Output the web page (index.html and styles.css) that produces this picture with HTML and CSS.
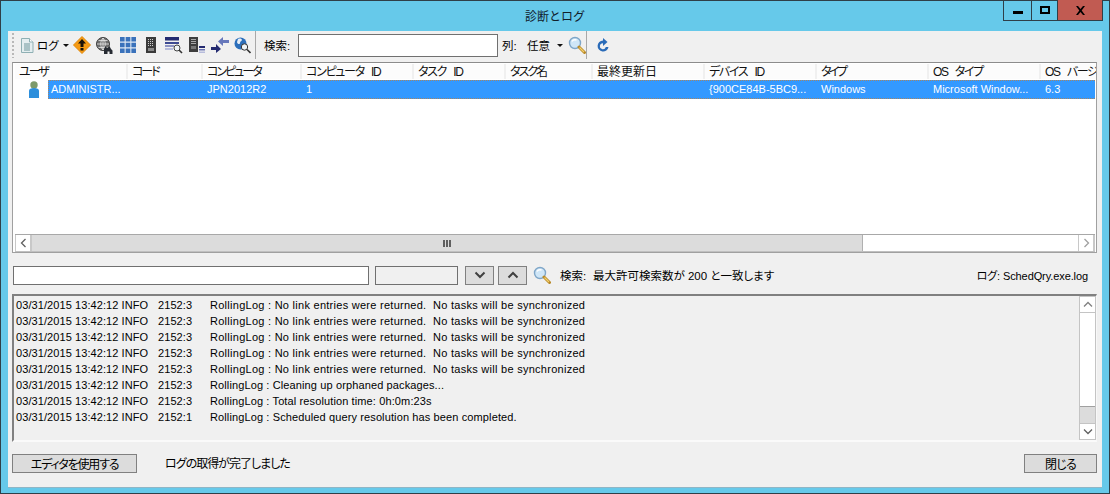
FILE: index.html
```html
<!DOCTYPE html>
<html lang="ja">
<head>
<meta charset="utf-8">
<title>診断とログ</title>
<link rel="stylesheet" href="styles.css">
</head>
<body>
<div class="window">
  <header class="titlebar">
    <span></span>
    <h1 class="title">診断とログ</h1>
    <div class="controls">
      <div class="ctl ctl-min"><i class="min-glyph"></i></div>
      <div class="ctl ctl-max"><i class="max-glyph"></i></div>
      <div class="ctl ctl-close"><svg width="11" height="9" viewBox="0 0 11 9"><path d="M1 0h2l2.500 3L8 0h2L6.700 4.500 10 9H8L5.500 6 3 9H1l3.300-4.500z" fill="#000"/></svg></div>
    </div>
  </header>

  <div class="client">
    <div class="toolbar">
      <div class="grip"></div>
      <div class="tool">
        <svg width="14" height="15" viewBox="0 0 14 15"><path d="M1.500.5h8l3.500 3.500v10.500h-11.500z" fill="#e4eef0" stroke="#8fb0b4"/><path d="M9.500.5v3.500h3.500" fill="#fff" stroke="#8fb0b4"/><path d="M4 6h6M4 8h6M4 10h6M4 12h6" stroke="#6f979c"/></svg>
      </div>
      <span class="tb-text tb-log">ログ</span>
      <i class="caret caret-log"></i>
      <div class="tool tool-first">
        <svg width="18" height="18" viewBox="0 0 18 18"><path d="M9 .5 17.500 9 9 17.500.5 9z" fill="#f59a12" stroke="#e08506"/><path d="M9 3 13 7.500H10.500V11H7.500V7.500H5zM7.500 12h3v2.500h-3z" fill="#1a1208"/></svg>
      </div>
      <div class="tool">
        <svg width="17" height="17" viewBox="0 0 17 17"><circle cx="7" cy="7" r="6.500" fill="#6e6e6e" stroke="#3e3e3e"/><path d="M1 7h12M7 1v12M2.500 3.500h9M2.500 10.500h9M7 1C4 4 4 10 7 13M7 1c3 3 3 9 0 12" stroke="#e8e8e8" stroke-width=".8" fill="none"/><path d="M8 17v-5l1.500-3 1.500 2 1 0 1.500-2 1.500 3 1.500 1.500V17h-3v-2.500h-2V17z" fill="#262b32"/></svg>
      </div>
      <div class="tool">
        <svg width="16" height="16" viewBox="0 0 16 16"><rect width="16" height="16" fill="#dfe8f3"/><path d="M0 0h4.600v4.600H0zM5.700 0h4.600v4.600H5.700zM11.400 0H16v4.600h-4.600zM0 5.700h4.600v4.600H0zM5.700 5.700h4.600v4.600H5.700zM11.400 5.700H16v4.600h-4.600zM0 11.400h4.600V16H0zM5.700 11.400h4.600V16H5.700zM11.400 11.400H16V16h-4.600z" fill="#3a72bb"/></svg>
      </div>
      <div class="tool">
        <svg width="10" height="16" viewBox="0 0 10 16"><rect width="10" height="16" fill="#3a3a3a"/><path d="M2 2h1v1H2zM4 2h1v1H4zM6 2h1v1H6zM2 4h1v1H2zM4 4h1v1H4zM6 4h1v1H6zM2 6h1v1H2zM4 6h1v1H4zM6 6h1v1H6zM2 8h1v1H2zM4 8h1v1H4zM6 8h1v1H6z" fill="#cfcfcf"/><rect x="2" y="11" width="6" height="3" fill="#8a8a8a"/></svg>
      </div>
      <div class="tool">
        <svg width="18" height="17" viewBox="0 0 18 17"><rect width="14" height="3.500" fill="#232a70"/><rect y="5" width="14" height="2" fill="#3d4a92"/><rect y="8" width="9" height="2" fill="#8c93c4"/><rect y="11" width="8" height="2" fill="#b7bcdc"/><circle cx="12" cy="11" r="3" fill="#eef3f6" stroke="#444"/><path d="M14 13l3 3" stroke="#333" stroke-width="1.600"/></svg>
      </div>
      <div class="tool">
        <svg width="16" height="16" viewBox="0 0 16 16"><rect width="9" height="15" fill="#3e3e3e"/><path d="M2 2h5v1H2zM2 4h5v1H2zM2 6h5v1H2z" fill="#a8a8a8"/><rect x="2" y="9" width="5" height="3" fill="#777"/><path d="M10 9h6v2h-6z" fill="#232a70"/><path d="M10 12h6v1.500h-6z" fill="#6c76b4"/><path d="M10 14.500h6v1.500h-6z" fill="#b7bcdc"/></svg>
      </div>
      <div class="tool">
        <svg width="18" height="16" viewBox="0 0 18 16"><path d="M0 10h5V7l5 5-5 4v-3H0z" fill="#232a70"/><path d="M18 3h-6V0L7 4.500 12 9V6h6z" fill="#6677bb"/></svg>
      </div>
      <div class="tool">
        <svg width="17" height="17" viewBox="0 0 17 17"><circle cx="6.500" cy="6.500" r="6" fill="#2c6fbb"/><path d="M4 2c2-1 4 0 4 1s-2 1-2 3-3 1-3-1zM8 8c2-1 3 0 3 1l-2 2z" fill="#e8eef5"/><circle cx="10.500" cy="10" r="3.200" fill="#eef3f6" stroke="#333"/><path d="M13 12.500l3.500 3.500" stroke="#333" stroke-width="1.600"/></svg>
      </div>
      <div class="sep"></div>
      <span class="tb-text tb-search">検索:</span>
      <input class="search-input" type="text">
      <span class="tb-text tb-col">列:</span>
      <span class="tb-text tb-any">任意</span>
      <i class="caret caret-any"></i>
      <svg class="lens lens-tb" width="18" height="18" viewBox="0 0 18 18"><use href="#lens"/></svg>
      <div class="sep sep-2"></div>
      <svg class="refresh" width="14" height="15" viewBox="0 0 14 15"><path d="M7 2.500a5.500 5.500 0 1 0 5.500 6.500h-2.700A3 3 0 1 1 7 5.200V8l4.500-4L7 0z" fill="#2a6bb8"/></svg>
    </div>

    <section class="table">
      <div class="thead">
        <div class="th tight-2">ユーザ</div>
        <div class="th tight-2">コード</div>
        <div class="th tight-2">コンピュータ</div>
        <div class="th tight-1">コンピュータ ID</div>
        <div class="th tight-1">タスク ID</div>
        <div class="th tight-2">タスク名</div>
        <div class="th">最終更新日</div>
        <div class="th tight-1">デバイス ID</div>
        <div class="th tight-3">タイプ</div>
        <div class="th tight-1">OS タイプ</div>
        <div class="th tight-1">OS バージ</div>
      </div>
      <div class="row">
        <div class="row-icon">
          <svg width="12" height="17" viewBox="0 0 12 17"><circle cx="6" cy="4" r="3.700" fill="#7d9a6a"/><path d="M1 17V9.500C1 8 3 7 6 7s5 1 5 2.500V17z" fill="#2d8fdc"/></svg>
        </div>
        <div class="selection">
          <div class="td td-first">ADMINISTR...</div>
          <div class="td"></div>
          <div class="td">JPN2012R2</div>
          <div class="td">1</div>
          <div class="td"></div>
          <div class="td"></div>
          <div class="td"></div>
          <div class="td">{900CE84B-5BC9...</div>
          <div class="td">Windows</div>
          <div class="td">Microsoft Window...</div>
          <div class="td">6.3</div>
        </div>
      </div>
      <div class="table-fill"></div>
      <div class="hscroll">
        <div class="sbtn"><svg width="7" height="10" viewBox="0 0 7 10"><path d="M5.500 1 1.500 5l4 4" fill="none" stroke="#606060" stroke-width="1.300"/></svg></div>
        <div class="hthumb"><i class="thumb-grip"></i></div>
        <div class="htrack"></div>
        <div class="sbtn"><svg width="7" height="10" viewBox="0 0 7 10"><path d="M1.500 1l4 4-4 4" fill="none" stroke="#a0a0a0" stroke-width="1.300"/></svg></div>
      </div>
    </section>

    <div class="findbar">
      <input class="find-main" type="text">
      <input class="find-count" type="text">
      <button class="nav-btn nav-down" type="button"><svg width="12" height="8" viewBox="0 0 12 8"><path d="M1.500 1.500 6 6l4.500-4.500" fill="none" stroke="#404040" stroke-width="2"/></svg></button>
      <button class="nav-btn nav-up" type="button"><svg width="12" height="8" viewBox="0 0 12 8"><path d="M1.500 6.500 6 2l4.500 4.500" fill="none" stroke="#404040" stroke-width="2"/></svg></button>
      <svg class="lens lens-find" width="18" height="18" viewBox="0 0 18 18"><use href="#lens"/></svg>
      <span class="find-label">検索:</span>
      <span class="find-msg">最大許可検索数が 200 と一致します</span>
      <span class="find-file">ログ: SchedQry.exe.log</span>
    </div>

    <section class="log">
      <div class="log-lines">
        <div class="line"><span>03/31/2015 13:42:12 INFO</span><span>2152:3</span><span class="msg">RollingLog : No link entries were returned.  No tasks will be synchronized</span></div>
        <div class="line"><span>03/31/2015 13:42:12 INFO</span><span>2152:3</span><span class="msg">RollingLog : No link entries were returned.  No tasks will be synchronized</span></div>
        <div class="line"><span>03/31/2015 13:42:12 INFO</span><span>2152:3</span><span class="msg">RollingLog : No link entries were returned.  No tasks will be synchronized</span></div>
        <div class="line"><span>03/31/2015 13:42:12 INFO</span><span>2152:3</span><span class="msg">RollingLog : No link entries were returned.  No tasks will be synchronized</span></div>
        <div class="line"><span>03/31/2015 13:42:12 INFO</span><span>2152:3</span><span class="msg">RollingLog : No link entries were returned.  No tasks will be synchronized</span></div>
        <div class="line"><span>03/31/2015 13:42:12 INFO</span><span>2152:3</span><span class="msg msg-short">RollingLog : Cleaning up orphaned packages...</span></div>
        <div class="line"><span>03/31/2015 13:42:12 INFO</span><span>2152:3</span><span class="msg msg-short">RollingLog : Total resolution time: 0h:0m:23s</span></div>
        <div class="line"><span>03/31/2015 13:42:12 INFO</span><span>2152:1</span><span class="msg msg-short">RollingLog : Scheduled query resolution has been completed.</span></div>
      </div>
      <div class="vscroll">
        <div class="vbtn"><svg width="10" height="7" viewBox="0 0 10 7"><path d="M1 5.500l4-4 4 4" fill="none" stroke="#808080" stroke-width="1.300"/></svg></div>
        <div class="vtrack"></div>
        <div class="vthumb"></div>
        <div class="vbtn"><svg width="10" height="7" viewBox="0 0 10 7"><path d="M1 1.500l4 4 4-4" fill="none" stroke="#606060" stroke-width="1.300"/></svg></div>
      </div>
    </section>

    <footer class="footer">
      <button class="btn btn-editor" type="button">エディタを使用する</button>
      <span class="status">ログの取得が完了しました</span>
      <button class="btn btn-close" type="button">閉じる</button>
    </footer>
  </div>
</div>
<svg class="defs" width="0" height="0">
  <symbol id="lens" viewBox="0 0 18 18">
    <circle cx="7" cy="7" r="5.500" fill="#cfe6f7" stroke="#7fa6c8" stroke-width="1.400"/>
    <path d="M4 5.500C5 3.800 7 3.500 8.500 4" stroke="#fff" stroke-width="1.400" fill="none"/>
    <path d="M11 11l5.500 5.500" stroke="#b98a2a" stroke-width="3" stroke-linecap="round"/>
    <path d="M11.500 11.500l4.500 4.500" stroke="#f3cf6a" stroke-width="1.200"/>
  </symbol>
</svg>
</body>
</html>
```

FILE: styles.css
```css
* { box-sizing: border-box; }
html, body { margin: 0; padding: 0; }
body {
  width: 1110px;
  height: 494px;
  overflow: hidden;
  font-family: "Liberation Sans", "Noto Sans CJK JP", sans-serif;
  font-size: 11px;
  color: #000;
}
.defs { display: block; width: 0; height: 0; }

.window {
  width: 1110px;
  height: 494px;
  display: flex;
  flex-direction: column;
  background: #66c9ea;
  border: 1px solid #2f3f48;
}

.titlebar {
  height: 30px;
  flex: none;
  display: grid;
  grid-template-columns: 1fr auto 1fr;
}
.title {
  margin: 0;
  font-size: 12px;
  font-weight: 400;
  line-height: 30px;
  font-family: "Noto Sans CJK JP", sans-serif;
  color: #10202a;
}
.controls {
  justify-self: end;
  display: flex;
  height: 21px;
  margin-top: -1px;
  margin-right: 6px;
  border: 1px solid #2f3f48;
  border-top: 0;
}
.ctl {
  display: flex;
  align-items: center;
  justify-content: center;
  height: 100%;
}
.ctl-min { width: 28px; border-right: 1px solid #2f3f48; }
.ctl-max { width: 26px; border-right: 1px solid #2f3f48; }
.ctl-close { width: 44px; background: #c15b52; }
.min-glyph { display: block; width: 10px; height: 3px; background: #000; margin-top: 5px; }
.max-glyph { display: block; width: 10px; height: 8px; border: 2px solid #000; }

.client {
  flex: 1;
  margin: 0 7px 6px;
  padding: 0 5px 0 4px;
  background: #f0f0f0;
  box-shadow: 0 1px 0 #8fb6c6;
  display: flex;
  flex-direction: column;
}

/* toolbar */
.toolbar {
  height: 28px;
  flex: none;
  display: flex;
  align-items: center;
  margin-left: -4px;
  margin-right: -5px;
}
.grip {
  width: 3px;
  height: 25px;
  margin-left: 4px;
  background-image: linear-gradient(#b8b8b8 2px, transparent 2px);
  background-size: 2px 4px;
  background-repeat: repeat-y;
}
.tool {
  width: 23px;
  height: 24px;
  flex: none;
  display: flex;
  align-items: center;
  justify-content: center;
}
.tb-text { white-space: nowrap; font-size: 11.5px; font-feature-settings: "palt"; }
.tb-log { margin-left: -1px; width: 22px; }
.caret {
  display: block;
  width: 0;
  height: 0;
  border-style: solid;
  border-width: 3px 3px 0;
  border-color: #111 transparent transparent;
  flex: none;
}
.caret-log { margin-left: 4px; }
.tool-first { margin-left: 1px; }
.sep {
  width: 1px;
  height: 28px;
  background: #a8a8a8;
  flex: none;
  margin-left: 1px;
}
.tb-search { margin-left: 8px; width: 34px; }
.search-input {
  width: 200px;
  height: 23px;
  margin: 0;
  padding: 0;
  background: #fff;
  border: 1px solid #707070;
  border-radius: 0;
  flex: none;
}
.tb-col { margin-left: 4px; width: 25px; }
.tb-any { width: 30px; }
.lens { display: block; flex: none; }
.lens-tb { margin-left: 5px; }
.sep-2 { margin-left: 0; }
.refresh { margin-left: 9px; flex: none; }

/* table */
.table {
  height: 191px;
  margin-top: 3px;
  flex: none;
  display: flex;
  flex-direction: column;
  background: #fff;
  border: 1px solid #a0a0a0;
  border-top-color: #8c8c8c;
  padding: 1px 0 0 1px;
}
.thead {
  display: grid;
  grid-template-columns: 111px 73px 97px 110px 90px 85px 110px 110px 110px 110px 55px;
  column-gap: 2px;
  height: 15px;
  flex: none;
  margin-left: 1px;
  background: #f0f0f0;
}
.th {
  background: #fcfcfc;
  line-height: 17px;
  padding-left: 4px;
  font-size: 12px;
  font-feature-settings: "palt";
  overflow: hidden;
  white-space: nowrap;
  color: #111;
}
.tight-1 { letter-spacing: -1.3px; word-spacing: 5px; }
.tight-2 { letter-spacing: -2px; }
.tight-3 { letter-spacing: -2.5px; }
.row {
  display: flex;
  height: 19px;
  margin-top: 1px;
  flex: none;
}
.row-icon {
  width: 34px;
  flex: none;
  padding-left: 14px;
}
.row-icon svg { display: block; margin-top: 1px; }
.selection {
  flex: 1;
  margin-right: 1px;
  display: grid;
  grid-template-columns: 79px 75px 99px 112px 92px 87px 112px 112px 112px 112px 1fr;
  background-color: #3399ff;
  background-image:
    repeating-linear-gradient(90deg, #a8845f 0 1px, transparent 1px 2px),
    repeating-linear-gradient(90deg, #a8845f 0 1px, transparent 1px 2px),
    repeating-linear-gradient(0deg, #a8845f 0 1px, transparent 1px 2px);
  background-size: 100% 1px, 100% 1px, 1px 100%;
  background-position: 0 0, 0 100%, 0 0;
  background-repeat: no-repeat;
  color: #fff;
}
.td {
  line-height: 18px;
  padding-left: 5px;
  white-space: nowrap;
  overflow: hidden;
  font-size: 11px;
}
.td-first { padding-left: 3px; }
.table-fill { flex: 1; }
.hscroll {
  height: 18px;
  flex: none;
  display: flex;
  border-top: 1px solid #a8a8a8;
  border-bottom: 1px solid #c0c0c0;
  margin-left: 1px;
  margin-right: 1px;
}
.sbtn {
  width: 17px;
  flex: none;
  display: flex;
  align-items: center;
  justify-content: center;
  background: #fff;
  border-left: 1px solid #c8c8c8;
  border-right: 2px solid #c8c8c8;
}
.hthumb {
  width: 831px;
  flex: none;
  background: #dcdcdc;
  display: flex;
  align-items: center;
  justify-content: center;
  border-right: 1px solid #b0b0b0;
}
.thumb-grip {
  display: block;
  width: 8px;
  height: 7px;
  background-image: linear-gradient(90deg, #606060 2px, transparent 2px);
  background-size: 3px 7px;
}
.htrack { flex: 1; background: #fff; }

/* find bar */
.findbar {
  height: 20px;
  margin-top: 12px;
  flex: none;
  display: flex;
  align-items: center;
  font-size: 11.5px;
  font-feature-settings: "palt";
}
.find-main {
  width: 356px;
  height: 19px;
  margin: 1px 0 0 1px;
  padding: 0;
  background: #fff;
  border: 1px solid #707070;
  border-radius: 0;
  flex: none;
}
.find-count {
  width: 83px;
  height: 19px;
  margin: 1px 0 0 6px;
  padding: 0;
  background: #f0f0f0;
  border: 1px solid #707070;
  border-radius: 0;
  flex: none;
}
.nav-btn {
  width: 29px;
  height: 19px;
  margin: 0;
  padding: 0;
  display: flex;
  align-items: center;
  justify-content: center;
  background: #dcdcdc;
  border: 1px solid #808080;
  border-radius: 0;
  flex: none;
}
.nav-down { margin-left: 7px; }
.nav-up { margin-left: 4px; }
.lens-find { margin-left: 6px; }
.find-label { margin-left: 9px; width: 33px; }
.find-msg { white-space: pre; }
.find-file { margin-left: auto; margin-right: 9px; white-space: nowrap; font-size: 11px; letter-spacing: -.1px; }

/* log */
.log {
  height: 148px;
  margin-top: 9px;
  flex: none;
  display: flex;
  border-top: 2px solid #808080;
  border-left: 2px solid #808080;
  border-bottom: 2px solid #fafafa;
  border-right: 1px solid #f8f8f8;
}
.log-lines { flex: 1; padding: 1px 0 0 2px; overflow: hidden; }
.line {
  height: 16px;
  line-height: 16px;
  display: grid;
  grid-template-columns: 142px 52px 1fr;
  white-space: pre;
  font-size: 11px;
  letter-spacing: .08px;
}
.line .msg { letter-spacing: .27px; }
.line .msg-short { letter-spacing: .12px; }
.vscroll {
  width: 17px;
  flex: none;
  display: flex;
  flex-direction: column;
  border-left: 1px solid #c4c4c4;
  border-right: 1px solid #c4c4c4;
}
.vbtn {
  height: 17px;
  flex: none;
  display: flex;
  align-items: center;
  justify-content: center;
  background: #fff;
  border-top: 1px solid #c4c4c4;
  border-bottom: 1px solid #c4c4c4;
}
.vtrack { flex: 1; background: #fff; }
.vthumb {
  height: 17px;
  flex: none;
  background: #dcdcdc;
  border-top: 1px solid #a0a0a0;
}

/* footer */
.footer {
  height: 19px;
  margin-top: 12px;
  flex: none;
  display: flex;
  align-items: center;
  font-size: 12px;
  font-feature-settings: "palt";
}
.btn {
  height: 19px;
  margin: 0;
  padding: 0 0 2px;
  background: #dcdcdc;
  border: 1px solid #808080;
  border-radius: 0;
  font: inherit;
  font-feature-settings: "palt";
  color: #000;
  flex: none;
}
.btn-editor { width: 125px; letter-spacing: -1.2px; }
.btn-close { width: 73px; margin-left: auto; letter-spacing: -.8px; }
.status { margin-left: 28px; margin-bottom: 2px; white-space: nowrap; letter-spacing: -1px; }
```
